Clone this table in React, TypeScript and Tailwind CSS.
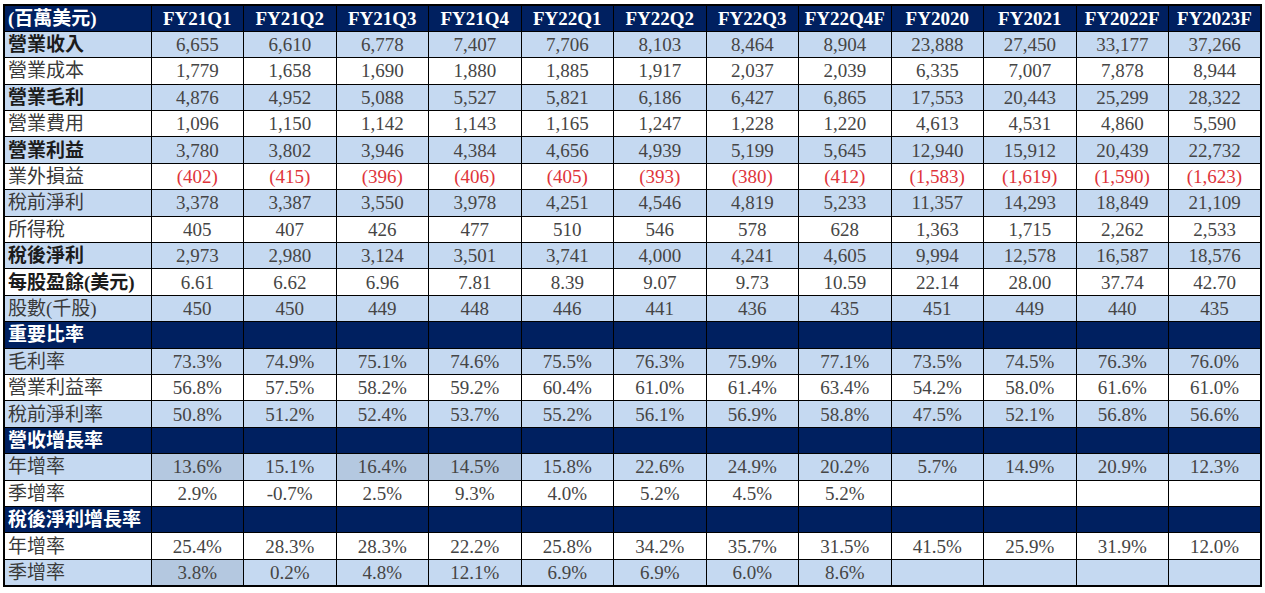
type Row =
  | { kind: "section"; label: string }
  | {
      kind: "data";
      label: string;
      bold?: boolean;
      bg: "blue" | "white";
      values: string[];
      red?: boolean;
      dark?: number[];
    };

const headers = [
  "FY21Q1",
  "FY21Q2",
  "FY21Q3",
  "FY21Q4",
  "FY22Q1",
  "FY22Q2",
  "FY22Q3",
  "FY22Q4F",
  "FY2020",
  "FY2021",
  "FY2022F",
  "FY2023F",
];

const split = (s: string) => s.split(" ");

const rows: Row[] = [
  { kind: "data", label: "營業收入", bold: true, bg: "blue", values: split("6,655 6,610 6,778 7,407 7,706 8,103 8,464 8,904 23,888 27,450 33,177 37,266") },
  { kind: "data", label: "營業成本", bg: "white", values: split("1,779 1,658 1,690 1,880 1,885 1,917 2,037 2,039 6,335 7,007 7,878 8,944") },
  { kind: "data", label: "營業毛利", bold: true, bg: "blue", values: split("4,876 4,952 5,088 5,527 5,821 6,186 6,427 6,865 17,553 20,443 25,299 28,322") },
  { kind: "data", label: "營業費用", bg: "white", values: split("1,096 1,150 1,142 1,143 1,165 1,247 1,228 1,220 4,613 4,531 4,860 5,590") },
  { kind: "data", label: "營業利益", bold: true, bg: "blue", values: split("3,780 3,802 3,946 4,384 4,656 4,939 5,199 5,645 12,940 15,912 20,439 22,732") },
  { kind: "data", label: "業外損益", bg: "white", red: true, values: split("(402) (415) (396) (406) (405) (393) (380) (412) (1,583) (1,619) (1,590) (1,623)") },
  { kind: "data", label: "稅前淨利", bg: "blue", values: split("3,378 3,387 3,550 3,978 4,251 4,546 4,819 5,233 11,357 14,293 18,849 21,109") },
  { kind: "data", label: "所得稅", bg: "white", values: split("405 407 426 477 510 546 578 628 1,363 1,715 2,262 2,533") },
  { kind: "data", label: "稅後淨利", bold: true, bg: "blue", values: split("2,973 2,980 3,124 3,501 3,741 4,000 4,241 4,605 9,994 12,578 16,587 18,576") },
  { kind: "data", label: "每股盈餘(美元)", bold: true, bg: "white", values: split("6.61 6.62 6.96 7.81 8.39 9.07 9.73 10.59 22.14 28.00 37.74 42.70") },
  { kind: "data", label: "股數(千股)", bg: "blue", values: split("450 450 449 448 446 441 436 435 451 449 440 435") },
  { kind: "section", label: "重要比率" },
  { kind: "data", label: "毛利率", bg: "blue", values: split("73.3% 74.9% 75.1% 74.6% 75.5% 76.3% 75.9% 77.1% 73.5% 74.5% 76.3% 76.0%") },
  { kind: "data", label: "營業利益率", bg: "white", values: split("56.8% 57.5% 58.2% 59.2% 60.4% 61.0% 61.4% 63.4% 54.2% 58.0% 61.6% 61.0%") },
  { kind: "data", label: "稅前淨利率", bg: "blue", values: split("50.8% 51.2% 52.4% 53.7% 55.2% 56.1% 56.9% 58.8% 47.5% 52.1% 56.8% 56.6%") },
  { kind: "section", label: "營收增長率" },
  { kind: "data", label: "年增率", bg: "blue", dark: [0, 2, 3], values: split("13.6% 15.1% 16.4% 14.5% 15.8% 22.6% 24.9% 20.2% 5.7% 14.9% 20.9% 12.3%") },
  { kind: "data", label: "季增率", bg: "white", values: [...split("2.9% -0.7% 2.5% 9.3% 4.0% 5.2% 4.5% 5.2%"), "", "", "", ""] },
  { kind: "section", label: "稅後淨利增長率" },
  { kind: "data", label: "年增率", bg: "white", values: split("25.4% 28.3% 28.3% 22.2% 25.8% 34.2% 35.7% 31.5% 41.5% 25.9% 31.9% 12.0%") },
  { kind: "data", label: "季增率", bg: "blue", dark: [0], values: [...split("3.8% 0.2% 4.8% 12.1% 6.9% 6.9% 6.0% 8.6%"), "", "", "", ""] },
];

const cell = "h-[26.4px] border border-black p-0 leading-none";

export default function App() {
  return (
    <div className="w-[1265px] h-[593px] bg-white pl-[3px] pt-[4px] font-['Liberation_Serif','Noto_Sans_CJK_TC',serif]">
      <table className="w-[1259px] table-fixed border-collapse border-2 border-black">
        <colgroup>
          <col className="w-[147px]" />
          {headers.map((h) => (
            <col key={h} />
          ))}
        </colgroup>
        <thead>
          <tr className="bg-[#002060] text-white">
            <th className={`${cell} pl-[3px] text-left text-[19px] font-bold`}>(百萬美元)</th>
            {headers.map((h) => (
              <th key={h} className={`${cell} text-center text-[19px] font-bold`}>
                {h}
              </th>
            ))}
          </tr>
        </thead>
        <tbody>
          {rows.map((r, i) => {
            if (r.kind === "section") {
              return (
                <tr key={i} className="bg-[#002060] text-white">
                  <td className={`${cell} pl-[3px] text-[19px] font-bold whitespace-nowrap overflow-visible`}>
                    {r.label}
                  </td>
                  {headers.map((h) => (
                    <td key={h} className={cell} />
                  ))}
                </tr>
              );
            }
            const rowBg = r.bg === "blue" ? "bg-[#c5d9f1]" : "bg-white";
            return (
              <tr key={i} className={rowBg}>
                <td
                  className={`${cell} pl-[3px] text-left text-[19px] whitespace-nowrap ${
                    r.bold ? "font-bold text-[#1c1c1c]" : "text-[#3a3a3a]"
                  }`}
                >
                  {r.label}
                </td>
                {r.values.map((v, j) => (
                  <td
                    key={j}
                    className={`${cell} text-center text-[19px] ${
                      r.red ? "text-[#e0353b]" : "text-[#454545]"
                    } ${r.dark?.includes(j) ? "bg-[#b4c8e0]" : ""}`}
                  >
                    {v}
                  </td>
                ))}
              </tr>
            );
          })}
        </tbody>
      </table>
    </div>
  );
}
